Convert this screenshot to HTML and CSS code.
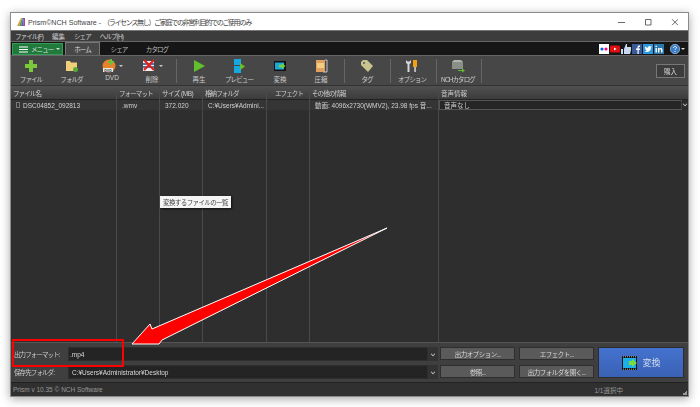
FILE: index.html
```html
<!DOCTYPE html>
<html lang="ja">
<head>
    <meta charset="UTF-8">
    <meta name="viewport" content="width=device-width, initial-scale=1.0">
    <title>Prism NCH Software</title>
    <link rel="stylesheet" href="styles.css">
</head>
<body>
    <div class="window">
        <div class="titlebar">
            <svg class="app-icon" viewBox="0 0 10 10" width="10" height="10">
                <path d="M1 9 5 1h1L3 9z" fill="#e0a030"/>
                <path d="M3 9 6 1h1L5 9z" fill="#50a050"/>
                <path d="M5 9 7 1h1L7 9z" fill="#5060c0"/>
                <path d="M7 9 8 1h1v8z" fill="#b04090"/>
            </svg>
            <span class="title-text">Prism©NCH Software - <span class="title-jp">（ライセンス無し）ご家庭での非営利目的でのご使用のみ</span></span>
            <div class="win-buttons">
                <svg viewBox="0 0 60 10" width="60" height="10">
                    <path d="M0 5.500h7" stroke="#444" stroke-width=".8" fill="none"/>
                    <path d="M27.500 2.500h5.500v5.500h-5.500z" stroke="#444" stroke-width=".8" fill="none"/>
                    <path d="M54 2.200 60 8.200M60 2.200 54 8.200" stroke="#444" stroke-width=".8" fill="none"/>
                </svg>
            </div>
        </div>
        <div class="menubar">
            <span>ファイル(F)</span>
            <span class="full">編集</span>
            <span>シェア</span>
            <span>ヘルプ(H)</span>
        </div>
        <div class="tabstrip">
            <div class="menu-btn">
                <svg viewBox="0 0 9 7" width="9" height="7"><path d="M0 .5h9v1H0zM0 3h9v1H0zM0 5.500h9v1H0z" fill="#fff"/></svg>
                <span>メニュー</span>
                <i class="caret caret-white"></i>
            </div>
            <div class="tab tab-active">ホーム</div>
            <div class="tab tab-share">シェア</div>
            <div class="tab tab-catalog">カタログ</div>
            <div class="social">
                <svg viewBox="0 0 10 10" width="10" height="10"><rect width="10" height="10" fill="#fff"/><circle cx="3" cy="5" r="1.600" fill="#0063dc"/><circle cx="7" cy="5" r="1.600" fill="#ff0084"/></svg>
                <svg viewBox="0 0 10 10" width="10" height="10"><rect y="1.500" width="10" height="7" rx="1.500" fill="#e01010"/><path d="M4 3.500 6.500 5 4 6.500z" fill="#fff"/></svg>
                <svg viewBox="0 0 10 10" width="10" height="10"><path d="M0 5h2v5H0zM3 5l2-5h1v3h4v3l-1 4H3z" fill="#c8d8ee"/></svg>
                <svg viewBox="0 0 10 10" width="10" height="10"><rect width="10" height="10" fill="#3b5a98"/><path d="M5.500 10V6H4V4.500h1.500V3.300C5.500 2 6.300 1.500 8 1.600V3H7.200c-.4 0-.5.200-.5.600v.9H8L7.800 6H6.700v4z" fill="#fff"/></svg>
                <svg viewBox="0 0 10 10" width="10" height="10"><rect width="10" height="10" fill="#2a9ae0"/><path d="M1.500 7.500c3 1.500 6.500 0 6.500-4l1-1-1 .2C7 1.500 5 2 5 3.800 3.600 3.800 2.600 3 2 2.300c-.4 1 0 1.800.6 2.200L2 4.400c.1.700.5 1.200 1.200 1.400H2.600c.2.500.7.900 1.300 1-.7.500-1.500.7-2.400.7z" fill="#fff"/></svg>
                <svg viewBox="0 0 10 10" width="10" height="10"><rect width="10" height="10" fill="#2a78b0"/><path d="M1.500 4h1.400v4.500H1.500zM1.500 1.800h1.400v1.300H1.500zM4 4h1.300v.7C6 3.600 8.500 3.600 8.500 5.800v2.700H7.100V6c0-1-1.700-1-1.700 0v2.500H4z" fill="#fff"/></svg>
                <svg class="help" viewBox="0 0 10 10" width="10" height="10"><circle cx="5" cy="5" r="4.700" fill="#3a7cc8" stroke="#cfe0f5" stroke-width=".6"/><path d="M3.500 4c0-2 3-2 3-.3C6.500 4.800 5 4.800 5 6M5 7v1" stroke="#fff" stroke-width=".9" fill="none"/></svg>
                <i class="caret caret-white"></i>
            </div>
        </div>
        <div class="toolbar">
            <div class="tool tool-file">
                <svg viewBox="0 0 14 14" width="14" height="14"><path d="M5 1h4v4h4v4H9v4H5V9H1V5h4z" fill="#7bc93a"/></svg>
                <span>ファイル</span>
            </div>
            <div class="tool tool-folder">
                <svg viewBox="0 0 14 14" width="14" height="14"><path d="M1 2h4l1 1.500h6V12H1z" fill="#efcf78"/><circle cx="10.500" cy="10.500" r="2.500" fill="#5aa83a"/></svg>
                <span>フォルダ</span>
            </div>
            <div class="tool tool-dvd">
                <div class="tool-icon">
                    <svg viewBox="0 0 14 14" width="14" height="14"><circle cx="7" cy="7" r="6.500" fill="#e8822a"/><rect x="1" y="9" width="10" height="4" fill="#e8e8e8"/><text x="6" y="12.500" text-anchor="middle" class="dvd-text">DVD</text><path d="M8 0h2v2h2v2h-2v2H8V4H6V2h2z" fill="#6cc040"/></svg>
                    <i class="caret caret-grey"></i>
                </div>
                <span class="full">DVD</span>
            </div>
            <div class="tool tool-delete">
                <div class="tool-icon">
                    <svg viewBox="0 0 14 14" width="14" height="14"><rect x="1" y="2" width="11" height="10" fill="#f0f0f0"/><path d="M1 5h11M1 8h11" stroke="#2a4a8a" stroke-width="1.500"/><path d="M2 1l10 10M12 1 2 11" stroke="#e02020" stroke-width="2.200"/></svg>
                    <i class="caret caret-grey"></i>
                </div>
                <span class="full">削除</span>
            </div>
            <i class="sep sep-1"></i>
            <div class="tool tool-play">
                <svg viewBox="0 0 14 14" width="14" height="14"><path d="M2 1 13 7 2 13z" fill="#62c02c"/></svg>
                <span class="full">再生</span>
            </div>
            <div class="tool tool-preview">
                <svg viewBox="0 0 14 14" width="14" height="14"><path d="M2 0h7v6H2zM2 7h7v7H2z" fill="#18a8e0"/><path d="M8 4l5 3.500L8 11z" fill="#62c02c"/></svg>
                <span>プレビュー</span>
            </div>
            <div class="tool tool-convert">
                <svg viewBox="0 0 14 14" width="14" height="14"><rect x="1" y="2" width="12" height="10" fill="#111"/><rect x="2" y="3.500" width="9" height="7" fill="#18a8e0"/><path d="M6 5.500h3V4l3.500 3L9 10V8.500H6z" fill="#70d040"/></svg>
                <span class="full">変換</span>
            </div>
            <div class="tool tool-zip">
                <svg viewBox="0 0 14 14" width="14" height="14"><rect x="2" y="1" width="9" height="12" fill="#e0a060"/><rect x="3" y="4" width="7" height="5" fill="#f0d080"/><path d="M11 1h2v12H9" fill="none" stroke="#c0c8d0"/></svg>
                <span class="full">圧縮</span>
            </div>
            <i class="sep sep-2"></i>
            <div class="tool tool-tag">
                <svg viewBox="0 0 14 14" width="14" height="14"><path d="M1 3 3 1h4l6 6-5 6-7-7z" fill="#c8c490"/><circle cx="4" cy="4" r="1" fill="#555"/></svg>
                <span>タグ</span>
            </div>
            <i class="sep sep-3"></i>
            <div class="tool tool-options">
                <svg viewBox="0 0 14 14" width="14" height="14"><path d="M1 1v3l1.500 1v8h2V5L6 4V1L4.500 2.500h-2z" fill="#d8d8d8"/><rect x="8" y="1" width="4" height="7" fill="#f0a010"/><rect x="9.300" y="8" width="1.500" height="5" fill="#d8d8d8"/></svg>
                <span>オプション</span>
            </div>
            <i class="sep sep-4"></i>
            <div class="tool tool-catalog">
                <svg viewBox="0 0 14 14" width="14" height="14"><path d="M1 3h11v7H1z" fill="#8a8f8a"/><path d="M1 3 3 1h7l2 2z" fill="#b0b4b0"/><path d="M7 11h4V9.500l3 2-3 2V12H7z" fill="#60c030"/></svg>
                <span>NCHカタログ</span>
            </div>
            <i class="sep sep-5"></i>
            <div class="buy-btn">購入</div>
        </div>
        <div class="grid">
            <div class="col col-name">
                <div class="col-head">ファイル名</div>
                <div class="cell"><i class="file-mark"></i>DSC04852_092813</div>
            </div>
            <div class="col col-format">
                <div class="col-head">フォーマット</div>
                <div class="cell">.wmv</div>
            </div>
            <div class="col col-size">
                <div class="col-head">サイズ (MB)</div>
                <div class="cell">372.020</div>
            </div>
            <div class="col col-folder">
                <div class="col-head">格納フォルダ</div>
                <div class="cell">C:¥Users¥Admini...</div>
            </div>
            <div class="col col-effect">
                <div class="col-head head-center">エフェクト</div>
                <div class="cell"></div>
            </div>
            <div class="col col-other">
                <div class="col-head">その他の情報</div>
                <div class="cell">動画: 4096x2730(WMV2), 23.98 fps 音...</div>
            </div>
            <div class="col col-audio">
                <div class="col-head full">音声情報</div>
                <div class="cell audio-cell">
                    <div class="audio-select">音声なし</div>
                    <i class="chevron"></i>
                </div>
            </div>
        </div>
        <div class="bottom">
            <div class="fields">
                <div class="field">
                    <label>出力フォーマット:</label>
                    <div class="input input-format">.mp4</div>
                    <div class="drop"><i class="chevron"></i></div>
                </div>
                <div class="field">
                    <label>保存先フォルダ:</label>
                    <div class="input">C:¥Users¥Administrator¥Desktop</div>
                    <div class="drop"><i class="chevron"></i></div>
                </div>
            </div>
            <div class="actions">
                <div class="btn">出力オプション...</div>
                <div class="btn">エフェクト...</div>
                <div class="btn">参照...</div>
                <div class="btn">出力フォルダを開く...</div>
            </div>
            <div class="convert-btn">
                <svg viewBox="0 0 16 16" width="16" height="16"><rect y="1" width="15" height="14" fill="#111"/><path d="M1 1.800h1M3 1.800h1M5 1.800h1M7 1.800h1M9 1.800h1M11 1.800h1M13 1.800h1M1 14.200h1M3 14.200h1M5 14.200h1M7 14.200h1M9 14.200h1M11 14.200h1M13 14.200h1" stroke="#ddd" stroke-width=".8"/><rect x="1" y="3" width="13" height="10" fill="#1ab0e8"/><path d="M7 6h3V4l5 4-5 4v-2H7z" fill="#80d840"/></svg>
                <span>変換</span>
            </div>
        </div>
        <div class="statusbar">
            <span class="status-left">Prism v 10.35 © NCH Software</span>
            <span class="status-right">1/1選択中</span>
            <i class="grip"></i>
        </div>

        <div class="tooltip">変換するファイルの一覧</div>
        <div class="red-box"></div>
        <svg class="arrow" viewBox="0 0 679 385" width="679" height="385">
            <path d="M122 332 140 312 142 317 377 216 152 328 149 332z" fill="#f00" stroke="#fff" stroke-width="1"/>
        </svg>
    </div>
</body>
</html>
```

FILE: styles.css
```css
* {
    box-sizing: border-box;
}
html, body {
    margin: 0;
    padding: 0;
}
body {
    width: 700px;
    height: 407px;
    background: #fff;
    overflow: hidden;
    font-family: "Liberation Sans", "Noto Sans CJK JP", sans-serif;
    font-size: 6.5px;
    color: #c8c8c8;
}
.window {
    position: relative;
    width: 679px;
    height: 385px;
    margin: 12px 0 0 10px;
    background: #2e2e2e;
    border: 1px solid #8a8a8a;
    box-shadow: 0 2px 9px rgba(0, 0, 0, .35);
    display: flex;
    flex-direction: column;
    filter: blur(.3px);
}

/* kana in the original font is narrow, kanji is not */
.menubar span, .tab, .menu-btn span, .tool span, .col-head, .field label, .btn, .tooltip {
    letter-spacing: -.9px;
    white-space: nowrap;
}
.menubar .full, .tool .full, .col-head.full {
    letter-spacing: 0;
}

/* title and menu */
.titlebar {
    height: 17px;
    flex: none;
    background: #fff;
    display: flex;
    align-items: center;
    padding-left: 5px;
    color: #444;
    font-size: 7.100px;
}
.title-text {
    margin-left: 2px;
    white-space: nowrap;
}
.title-jp {
    letter-spacing: -1.400px;
}
.win-buttons {
    margin-left: auto;
    margin-right: 10px;
    display: flex;
}
.menubar {
    height: 11px;
    flex: none;
    background: #3c3c3c;
    border-top: 1px solid #777;
    display: flex;
    align-items: center;
    gap: 9px;
    padding-left: 4px;
    color: #ccc;
}

/* tabs */
.tabstrip {
    height: 15px;
    flex: none;
    background: #161616;
    border-top: 1px solid #666;
    border-bottom: 1px solid #666;
    display: flex;
    align-items: flex-end;
    padding-left: 1px;
}
.menu-btn {
    width: 51px;
    height: 12px;
    background: #1f7a3c;
    border: 1px solid #3a9a5a;
    display: flex;
    align-items: center;
    gap: 3px;
    padding-left: 6px;
    color: #ddd;
}
.tab {
    height: 13px;
    display: flex;
    align-items: center;
    justify-content: center;
    color: #bbb;
}
.tab-active {
    width: 35px;
    margin-left: 2px;
    background: #484848;
    border: 1px solid #777;
    border-bottom: none;
    color: #ddd;
}
.tab-share {
    width: 38px;
}
.tab-catalog {
    width: 38px;
}
.social {
    margin-left: auto;
    margin-right: 3px;
    align-self: center;
    display: flex;
    align-items: center;
    gap: 1px;
}
.help {
    margin-left: 5px;
}
.caret {
    display: inline-block;
    width: 0;
    height: 0;
    border-left: 2px solid transparent;
    border-right: 2px solid transparent;
}
.caret-white {
    border-top: 2px solid #ddd;
}
.caret-grey {
    border-top: 2px solid #ccc;
    margin-left: 3px;
}

/* toolbar */
.toolbar {
    height: 30px;
    flex: none;
    background: #474747;
    display: flex;
    align-items: flex-start;
    padding: 3px 0 0 1px;
    border-bottom: 1px solid #333;
}
.tool {
    display: flex;
    flex-direction: column;
    align-items: center;
    gap: 1px;
    color: #ccc;
}
.tool svg {
    flex: none;
}
.dvd-text {
    font-size: 3.500px;
    font-weight: bold;
    fill: #333;
}
.tool-icon {
    display: flex;
    align-items: center;
    height: 14px;
}
.tool-file { width: 38px; }
.tool-folder { width: 41px; margin-left: 1px; }
.tool-dvd { width: 40px; }
.tool-delete { width: 40px; }
.tool-play { width: 44px; }
.tool-preview { width: 36px; }
.tool-convert { width: 46px; }
.tool-zip { width: 36px; }
.tool-tag { width: 44px; }
.tool-options { width: 42px; }
.tool-catalog { width: 42px; }
.sep {
    width: 1px;
    height: 24px;
    background: #666;
    flex: none;
}
.sep-1 { margin-left: 4px; }
.sep-2 { margin-left: 5px; }
.sep-3 { margin-left: 1px; }
.sep-4 { margin-left: 3px; }
.sep-5 { margin-left: 2px; }
.buy-btn {
    width: 29px;
    height: 14px;
    margin-left: auto;
    margin-right: 3px;
    margin-top: 5px;
    border: 1px solid #777;
    background: #3c3c3c;
    display: flex;
    align-items: center;
    justify-content: center;
    color: #ddd;
}

/* file list */
.grid {
    flex: 1;
    display: flex;
    min-height: 0;
}
.col {
    border-right: 1px solid #474b4f;
    display: flex;
    flex-direction: column;
}
.col-name { width: 106px; }
.col-format { width: 43px; }
.col-size { width: 43px; }
.col-folder { width: 64px; }
.col-effect { width: 43px; }
.col-other { width: 129px; }
.col-audio {
    flex: 1;
    border-right: none;
}
.col-head {
    height: 14px;
    flex: none;
    background: linear-gradient(#505050, #3c3c3c);
    border-bottom: 1px solid #222;
    display: flex;
    align-items: center;
    padding-left: 2px;
    color: #ccc;
}
.col-size .col-head {
    letter-spacing: -.5px;
}
.head-center {
    justify-content: center;
}
.cell {
    height: 10px;
    flex: none;
    background: #353535;
    display: flex;
    align-items: center;
    padding-left: 5px;
    color: #d0d0d0;
    white-space: nowrap;
}
.file-mark {
    width: 4px;
    height: 6px;
    border: 1px solid #777;
    margin-right: 3px;
}
.audio-cell {
    padding-left: 0;
    background: #2a2a2a;
}
.audio-select {
    flex: 1;
    height: 10px;
    border: 1px solid #555;
    border-right: 1px solid #444;
    background: #262626;
    padding-left: 4px;
    display: flex;
    align-items: center;
}
.chevron {
    display: block;
    width: 4px;
    height: 4px;
    margin: 0 1px 1px;
    border-right: 1px solid #ccc;
    border-bottom: 1px solid #ccc;
    transform: rotate(45deg) scale(.8);
}
.audio-cell .chevron {
    margin: 0 1px 2px;
}

/* bottom form */
.bottom {
    height: 40px;
    flex: none;
    background: #3f3f3f;
    border-top: 1px solid #555;
    display: flex;
    padding: 4px 4px 0 3px;
}
.fields {
    width: 425px;
    display: flex;
    flex-direction: column;
    gap: 4px;
}
.field {
    height: 14px;
    display: flex;
    align-items: center;
}
.field label {
    width: 54px;
    flex: none;
    color: #ccc;
}
.input {
    flex: 1;
    height: 14px;
    background: #242424;
    border: 1px solid #2e2e2e;
    display: flex;
    align-items: center;
    padding-left: 3px;
    color: #d8d8d8;
}
.input-format {
    padding-left: 1px;
}
.drop {
    width: 10px;
    height: 14px;
    background: #333;
    display: flex;
    align-items: center;
    justify-content: center;
}
.actions {
    margin-left: 2px;
    width: 154px;
    height: 31px;
    display: grid;
    grid-template-columns: 75px 75px;
    grid-template-rows: 13px 13px;
    column-gap: 4px;
    row-gap: 5px;
}
.btn {
    background: #5a5a5a;
    border: 1px solid #2e2e2e;
    display: flex;
    align-items: center;
    justify-content: center;
    color: #d8d8d8;
    letter-spacing: -.5px;
}
.convert-btn {
    width: 86px;
    height: 31px;
    margin-left: 4px;
    background: linear-gradient(#4472cf, #3a62b4);
    border: 1px solid #2c2c2c;
    display: flex;
    align-items: center;
    justify-content: center;
    gap: 5px;
    color: #d0dcf0;
    font-size: 9px;
}

/* status bar */
.statusbar {
    height: 14px;
    flex: none;
    background: #303030;
    border-top: 1px solid #222;
    display: flex;
    align-items: center;
    padding-left: 2px;
    color: #999;
    position: relative;
}
.status-right {
    margin-left: auto;
    margin-right: 65px;
}
.grip {
    position: absolute;
    right: 1px;
    bottom: 1px;
    width: 5px;
    height: 5px;
    background: linear-gradient(135deg, transparent 50%, #999 50%);
}

/* things lying over the window */
.tooltip {
    position: absolute;
    left: 149px;
    top: 183px;
    width: 71px;
    height: 12px;
    background: #f4f4f4;
    color: #444;
    letter-spacing: -.6px;
    display: flex;
    align-items: center;
    justify-content: center;
    box-shadow: 1px 1px 2px rgba(0, 0, 0, .7);
}
.red-box {
    position: absolute;
    left: 1px;
    top: 326px;
    width: 112px;
    height: 28px;
    border: 2px solid #f00;
}
.arrow {
    position: absolute;
    left: -1px;
    top: -1px;
}
```
